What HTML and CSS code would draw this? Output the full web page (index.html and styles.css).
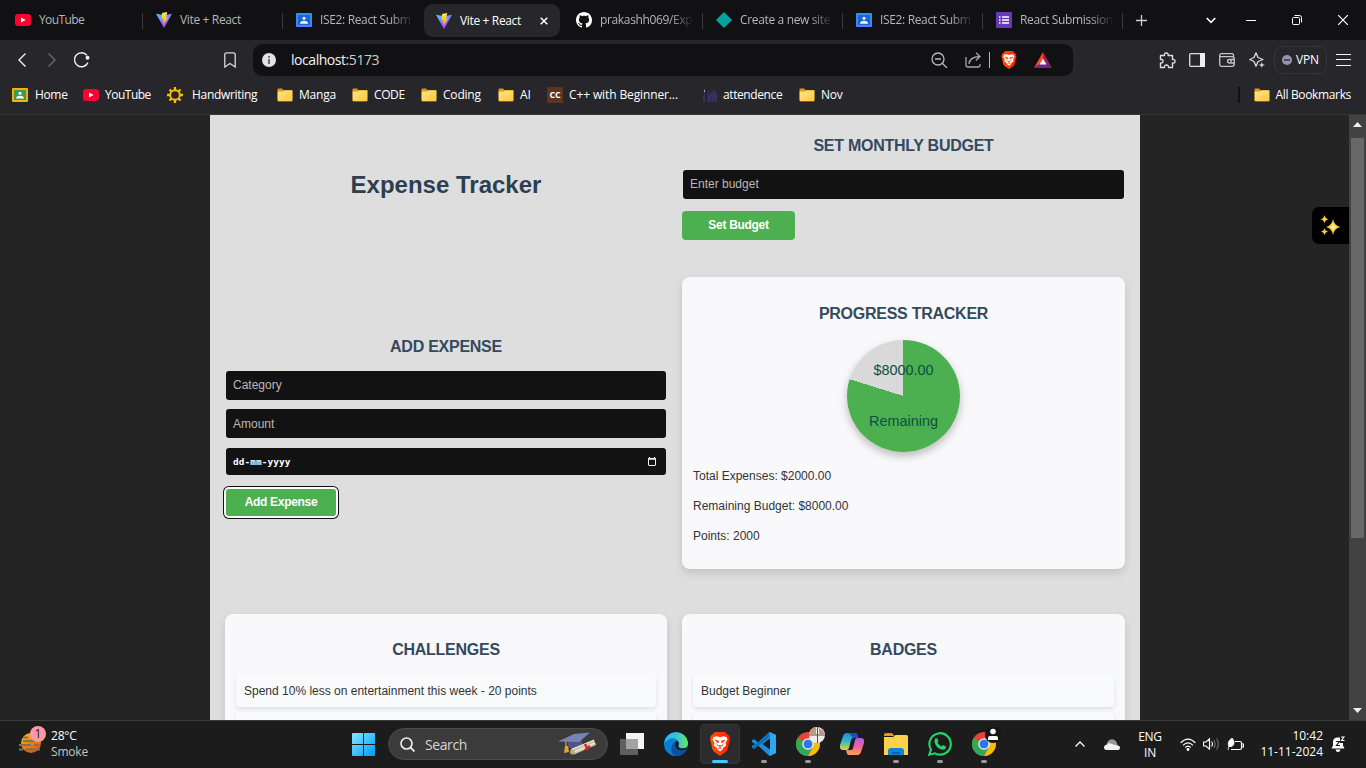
FILE: index.html
```html
<!DOCTYPE html>
<html lang="en">
<head>
<meta charset="utf-8">
<title>Vite + React</title>
<link rel="stylesheet" href="styles.css">
</head>
<body>
<svg class="defs" width="0" height="0">
  <defs>
    <linearGradient id="viteA" x1="0" y1="0" x2="0.6" y2="1"><stop offset="0" stop-color="#41d1ff"/><stop offset="1" stop-color="#bd34fe"/></linearGradient>
    <linearGradient id="viteB" x1="0" y1="0" x2="0" y2="1"><stop offset="0" stop-color="#ffea83"/><stop offset="0.2" stop-color="#ffdd35"/><stop offset="1" stop-color="#ffa800"/></linearGradient>
    <linearGradient id="folderG" x1="0" y1="0" x2="1" y2="1"><stop offset="0" stop-color="#ffe48c"/><stop offset="1" stop-color="#ffc93c"/></linearGradient>
    <linearGradient id="winG" x1="0" y1="0" x2="1" y2="1"><stop offset="0" stop-color="#8be2ff"/><stop offset="0.5" stop-color="#3fc4ff"/><stop offset="1" stop-color="#0a93f5"/></linearGradient>
    <linearGradient id="smokeG" x1="0" y1="0" x2="0.6" y2="1"><stop offset="0" stop-color="#fcc40c"/><stop offset="1" stop-color="#e2570a"/></linearGradient>
    <linearGradient id="edgeG" x1="0" y1="0" x2="1" y2="0"><stop offset="0" stop-color="#29b9e8"/><stop offset="0.55" stop-color="#35c6d8"/><stop offset="1" stop-color="#6fe84f"/></linearGradient>
    <linearGradient id="braveG" x1="0" y1="0" x2="1" y2="0"><stop offset="0" stop-color="#ff5500"/><stop offset="1" stop-color="#ff2000"/></linearGradient>
    <linearGradient id="copA" x1="0" y1="0" x2="0" y2="1"><stop offset="0" stop-color="#1a8be8"/><stop offset="0.5" stop-color="#35b8c9"/><stop offset="1" stop-color="#e9d22f"/></linearGradient>
    <linearGradient id="copB" x1="0" y1="0" x2="0" y2="1"><stop offset="0" stop-color="#b05df0"/><stop offset="0.5" stop-color="#f0609c"/><stop offset="1" stop-color="#ffa34a"/></linearGradient>
    <symbol id="youtube" viewBox="0 0 16 16"><rect y="2" width="16" height="12" rx="3" fill="#ff0033"/><path d="M6 5.6v4.8L10.6 8z" fill="#fff"/></symbol>
    <symbol id="vite" viewBox="0 0 16 16"><path d="M0 1.8 8 16 16 1.8 8 3.2z" fill="url(#viteA)"/><path d="M11.2.1 6 1.1 5.6 7.2l1.9-.3-.7 3 1.3-.3-.8 3.5L12 5.500l-2 .3z" fill="url(#viteB)"/></symbol>
    <symbol id="classroom" viewBox="0 0 16 16"><rect y="1" width="16" height="14" rx="1" fill="#4285f4"/><rect x="2" y="3" width="12" height="10" fill="#1967d2"/><circle cx="8" cy="6.300" r="1.500" fill="#fff"/><path d="M4 11.800c0-2.200 2.200-3 4-3s4 .8 4 3z" fill="#fff"/></symbol>
    <symbol id="folder" viewBox="0 0 16 14"><path d="M.5 1.500Q.5.500 1.500.500H5L6.500 2H15Q15.500 2 15.500 3V12.500Q15.500 13.500 14.500 13.500H1.500Q.5 13.500.5 12.500z" fill="#d99a1d"/><path d="M.7 3.500H6L7.200 2.500H15.300V12Q15.300 13 14.300 13H1.700Q.7 13 .7 12z" fill="url(#folderG)"/></symbol>
    <symbol id="chrome" viewBox="0 0 24 24"><circle cx="12" cy="12" r="12" fill="#ea4335"/><path d="M12 12 1.600 6A12 12 0 0 0 12 24l5.200-9z" fill="#34a853"/><path d="M12 6.500H22.600A12 12 0 0 1 12 24l5-9z" fill="#fbbc05"/><circle cx="12" cy="12" r="5.700" fill="#fff"/><circle cx="12" cy="12" r="4.500" fill="#2f76ec"/></symbol>
    <symbol id="brave" viewBox="0 0 20 24"><path d="M5 0H15L17.500 2.500 19 3.500 20 7 17.500 17.500Q17 19 15 20.500L10 24 5 20.500Q3 19 2.500 17.500L0 7 1 3.500 2.500 2.500z" fill="url(#braveG)"/><path d="M3.500 5 7 4.300 10 5.200 13 4.300 16.500 5 17.500 7.500 15.500 11 16.200 13.500 13.500 15.500 12.500 17.500 10 19.500 7.500 17.500 6.500 15.500 3.800 13.500 4.500 11 2.500 7.500z" fill="#fff"/><path d="M4.800 8 8.800 9 8 11zM15.200 8 11.200 9 12 11zM8.500 13.500h3L10 14.800zM6.500 11.500 8 14.500M13.500 11.500 12 14.500M8 16.500 10 15.500 12 16.500" fill="#ff4300" stroke="#ff4300" stroke-width=".7"/></symbol>
  </defs>
</svg>

<header class="tabs">
  <div class="tab tab-first"><svg class="ic16"><use href="#youtube"/></svg><span class="tab-title">YouTube</span></div>
  <div class="tab"><svg class="ic16"><use href="#vite"/></svg><span class="tab-title">Vite + React</span></div>
  <div class="tab tab-bare"><svg class="ic16"><use href="#classroom"/></svg><span class="tab-title fade">ISE2: React Subm</span></div>
  <div class="tab tab-bare tab-active"><svg class="ic16"><use href="#vite"/></svg><span class="tab-title">Vite + React</span><svg class="tab-close" viewBox="0 0 8 8"><path d="M.7.700 7.300 7.300M7.300.700.700 7.300" stroke="#fff" stroke-width="1.500"/></svg></div>
  <div class="tab"><svg class="ic16" viewBox="0 0 16 16"><path fill="#fff" d="M8 0C3.580 0 0 3.580 0 8c0 3.540 2.290 6.530 5.470 7.590.4.070.55-.17.55-.38 0-.19-.01-.82-.01-1.490-2.010.37-2.530-.49-2.690-.94-.09-.23-.48-.94-.82-1.130-.28-.15-.68-.52-.01-.53.63-.01 1.080.58 1.230.82.72 1.210 1.870.87 2.330.66.07-.52.28-.87.51-1.070-1.780-.2-3.640-.89-3.640-3.950 0-.87.31-1.590.82-2.150-.08-.2-.36-1.020.08-2.120 0 0 .67-.21 2.200.82.640-.18 1.320-.27 2-.27s1.360.09 2 .27c1.530-1.040 2.200-.82 2.200-.82.440 1.100.16 1.920.08 2.120.51.56.82 1.270.82 2.150 0 3.070-1.870 3.750-3.650 3.950.29.25.54.73.54 1.480 0 1.070-.01 1.930-.01 2.200 0 .21.15.46.55.38A8 8 0 0 0 16 8c0-4.420-3.580-8-8-8"/></svg><span class="tab-title fade">prakashh069/Exp</span></div>
  <div class="tab"><svg class="ic16" viewBox="0 0 16 16"><path d="M8 0 16 8 8 16 0 8z" fill="#05a3a0"/></svg><span class="tab-title fade">Create a new site</span></div>
  <div class="tab"><svg class="ic16"><use href="#classroom"/></svg><span class="tab-title fade">ISE2: React Subm</span></div>
  <div class="tab"><svg class="ic16" viewBox="0 0 16 16"><rect width="16" height="16" rx="1" fill="#673ab7"/><path d="M3 5h1.500M6 5h7M3 8h1.500M6 8h7M3 11h1.500M6 11h7" stroke="#fff" stroke-width="1.700"/></svg><span class="tab-title fade">React Submission</span></div>
  <div class="slot slot-new"><svg width="11" height="11" viewBox="0 0 11 11"><path d="M5.500 0v11M0 5.500h11" stroke="#d0d0d2" stroke-width="1.300"/></svg></div>
  <div class="slot slot-list"><svg width="10" height="7" viewBox="0 0 10 7"><path d="M.7 1 5 5.300 9.300 1" fill="none" stroke="#fff" stroke-width="1.600"/></svg></div>
  <div class="slot slot-win"><svg width="10" height="2"><path d="M0 1.500h10" stroke="#fff"/></svg></div>
  <div class="slot slot-win"><svg width="10" height="10" viewBox="0 0 10 10"><rect x=".5" y="2.500" width="7" height="7" rx="1" fill="none" stroke="#fff"/><path d="M2.500.500H7.500Q9.500.500 9.500 2.500V7.500" fill="none" stroke="#fff"/></svg></div>
  <div class="slot slot-win"><svg width="10" height="10" viewBox="0 0 10 10"><path d="M0 0 10 10M10 0 0 10" stroke="#fff" stroke-width="1.200"/></svg></div>
</header>

<nav class="toolbar">
  <div class="slot nav-slot"><svg width="8" height="14" viewBox="0 0 8 14"><path d="M7.500.500 1 7l6.500 6.500" fill="none" stroke="#eee" stroke-width="1.400"/></svg></div>
  <div class="slot nav-slot"><svg width="8" height="14" viewBox="0 0 8 14"><path d="M.5.500 7 7 .5 13.500" fill="none" stroke="#6e6e72" stroke-width="1.300"/></svg></div>
  <div class="slot nav-slot"><svg width="16" height="16" viewBox="0 0 16 16"><path d="M13.900 10.600A7 7 0 1 1 13 3.400" fill="none" stroke="#eee" stroke-width="1.400"/><circle cx="13.500" cy="5.800" r="2" fill="#eee"/></svg></div>
  <div class="slot mark-slot"><svg width="12" height="16" viewBox="0 0 12 16"><path d="M.8 15V2.800Q.8.800 2.800.800H9.200Q11.200.800 11.200 2.800V15L6 11.500z" fill="none" stroke="#d8d8dc" stroke-width="1.300"/></svg></div>
  <div class="address">
    <svg width="14" height="14" viewBox="0 0 14 14"><circle cx="7" cy="7" r="7" fill="#e2e2e7"/><path d="M7 6v5M7 3v1.700" stroke="#55555c" stroke-width="1.700"/></svg>
    <span class="url">localhost<span class="port">:5173</span></span>
    <svg class="zoom" width="17" height="16" viewBox="0 0 17 16"><circle cx="7" cy="7" r="6" fill="none" stroke="#b8b8bc" stroke-width="1.300"/><path d="M4 7h6M11.300 11.300 16 16" stroke="#b8b8bc" stroke-width="1.300"/></svg>
    <svg class="share" width="17" height="16" viewBox="0 0 17 16"><path d="M1 5V13Q1 15 3 15H13Q15 15 15 13V12M4 12Q4.500 5 14.500 4.500M11 .700 15 4.500 11 8.500" fill="none" stroke="#a6a6aa" stroke-width="1.300"/></svg>
    <span class="bar"></span>
    <svg class="shield" width="16" height="18"><use href="#brave"/></svg>
    <svg class="bat" width="18" height="16" viewBox="0 0 18 16"><path d="M9 0 0 16 9 10z" fill="#ff4724"/><path d="M9 0 18 16 9 10z" fill="#9e1f63"/><path d="M0 16H18L9 10z" fill="#662d91"/><path d="M9 6.500 5.500 12.500H12.500z" fill="#fff"/></svg>
  </div>
  <div class="slot ext-slot"><svg width="17" height="17" viewBox="0 0 17 17"><path d="M1.500 3.500H5.500Q5 1 7.300 1 9.600 1 9.100 3.500H13.500V7.500Q16 7 16 9.300 16 11.500 13.500 11V15.500H9.500Q9.700 13 7.500 13 5.200 13 5.500 15.500H1.500V11Q4 11.300 4 9.200 4 7 1.500 7.500z" fill="none" stroke="#ddd" stroke-width="1.400" stroke-linejoin="round"/></svg></div>
  <div class="slot side-slot"><svg width="16" height="14" viewBox="0 0 16 14"><rect x=".7" y=".7" width="14.600" height="12.600" rx="1" fill="none" stroke="#ddd" stroke-width="1.300"/><path d="M11 0H16V14H11z" fill="#eee"/></svg></div>
  <div class="slot side-slot"><svg width="16" height="14" viewBox="0 0 16 14"><path d="M14.500 4V2Q14.500.700 13 .700H2.500Q.7.700.700 2.500V11.500Q.7 13.300 2.500 13.300H13Q15.300 13.300 15.300 11V6Q15.300 3.700 13 3.700H1M15 6.500H10.500Q8.500 6.500 8.500 8.200 8.500 10 10.500 10H15M11 8.200h2" fill="none" stroke="#c4c4c4" stroke-width="1.300"/></svg></div>
  <div class="slot side-slot"><svg width="16" height="16" viewBox="0 0 16 16"><path d="M7 .8 9 5.500 14 7.500 9 9.500 7 14.200 5 9.500.800 7.500 5 5.500z" fill="none" stroke="#ddd" stroke-width="1.300" stroke-linejoin="round"/><path d="M12.800 10 13.600 12.200 16 13 13.600 13.800 12.800 16 12 13.800 9.500 13 12 12.200z" fill="#ddd"/></svg></div>
  <div class="vpn"><span class="vpn-dot"></span>VPN</div>
  <svg class="burger" width="15" height="12"><path d="M0 .5h15M0 5.500h15M0 11.500h15" stroke="#f2f2f2"/></svg>
</nav>

<nav class="bookmarks">
  <div class="bm w-home"><svg class="ic16" viewBox="0 0 16 16"><rect y="1" width="16" height="14" rx="1" fill="#f4b400"/><rect x="2" y="3" width="12" height="10" fill="#3c9a55"/><circle cx="8" cy="6.300" r="1.500" fill="#fff"/><path d="M4 11.500c0-2 2.200-2.700 4-2.700s4 .7 4 2.700z" fill="#fff"/></svg><span>Home</span></div>
  <div class="bm w-yt"><svg class="ic16"><use href="#youtube"/></svg><span>YouTube</span></div>
  <div class="bm w-hand"><svg class="ic16" viewBox="0 0 16 16"><circle cx="8" cy="8" r="4.800" fill="none" stroke="#fbbc05" stroke-width="1.900"/><path d="M8 0v3M8 13v3M0 8h3M13 8h3M2.500 2.500l2 2M11.500 11.500l2 2M13.500 2.500l-2 2M4.500 11.500l-2 2" stroke="#fbbc05" stroke-width="2.300"/></svg><span>Handwriting</span></div>
  <div class="bm w-manga"><svg class="ic-folder"><use href="#folder"/></svg><span>Manga</span></div>
  <div class="bm w-code"><svg class="ic-folder"><use href="#folder"/></svg><span>CODE</span></div>
  <div class="bm w-coding"><svg class="ic-folder"><use href="#folder"/></svg><span>Coding</span></div>
  <div class="bm w-ai"><svg class="ic-folder"><use href="#folder"/></svg><span>AI</span></div>
  <div class="bm w-cpp"><b class="cc">CC</b><span>C++ with Beginner...</span></div>
  <div class="bm w-att"><svg class="ic16" viewBox="0 0 16 16"><path d="M3 1h1v14H2V9h1zM7 4h1v11H6zM8 8l2-2 3-4 1 3 2 1v9h-2v-4l-1 4h-2V9l-1 6H8z" fill="#38305e"/><path d="M3 3h1v2H3z" fill="#aaa"/></svg><span>attendence</span></div>
  <div class="bm"><svg class="ic-folder"><use href="#folder"/></svg><span>Nov</span></div>
  <div class="bm bm-all"><i class="bm-sep"></i><svg class="ic-folder"><use href="#folder"/></svg><span>All Bookmarks</span></div>
</nav>

<div class="viewport">
  <main class="app">
    <h1 class="title">Expense Tracker</h1>
    <section class="budget">
      <h2>Set Monthly Budget</h2>
      <div class="field">Enter budget</div>
      <button class="btn">Set Budget</button>
    </section>
    <section class="expense">
      <h2>Add Expense</h2>
      <div class="field">Category</div>
      <div class="field field-amount">Amount</div>
      <div class="field field-date"><span class="date">dd<i>-</i>mm<i>-</i>yyyy</span><svg width="8" height="9" viewBox="0 0 8 9"><rect x=".5" y="1.500" width="7" height="7" rx=".5" fill="none" stroke="#eee"/><path d="M0 2h8M1.500 0v2M6.500 0v2" stroke="#eee" stroke-width="1.300"/></svg></div>
      <button class="btn btn-focus">Add Expense</button>
    </section>
    <section class="card progress">
      <h2>Progress Tracker</h2>
      <div class="pie"><span>$8000.00</span><span>Remaining</span></div>
      <p>Total Expenses: $2000.00</p>
      <p>Remaining Budget: $8000.00</p>
      <p>Points: 2000</p>
    </section>
    <section class="card">
      <h2>Challenges</h2>
      <ul class="list"><li>Spend 10% less on entertainment this week - 20 points</li><li></li></ul>
    </section>
    <section class="card">
      <h2>Badges</h2>
      <ul class="list"><li>Budget Beginner</li><li></li></ul>
    </section>
  </main>
  <div class="sparkle"><svg width="21" height="21" viewBox="0 0 21 21"><path d="M13 4Q14 10.500 20.500 12 14 13.500 13 20 12 13.500 6 12 12 10.500 13 4zM4.500 0Q5 3.500 8.500 4.300 5 5 4.500 8.500 4 5 .500 4.300 4 3.500 4.500 0zM4.500 13Q5 16 8 16.500 5 17.200 4.500 20 4 17.200 1 16.500 4 16 4.500 13z" fill="#ffcf28"/><path d="M13 8Q13.500 11.500 17 12 13.500 12.500 13 16 12.500 12.500 9 12 12.500 11.500 13 8z" fill="#fff0a8"/></svg></div>
  <div class="scroll">
    <svg width="9" height="6"><path d="M4.500 0 9 5H0z" fill="#f0f0f0"/></svg>
    <span class="thumb"></span>
    <svg width="9" height="6"><path d="M4.500 5 9 0H0z" fill="#f0f0f0"/></svg>
  </div>
</div>

<footer class="taskbar">
  <div class="weather">
    <svg width="28" height="30" viewBox="0 0 28 30"><circle cx="12" cy="17" r="10" fill="url(#smokeG)"/><path d="M4 11.500h5M4 15h14M0 19h12M15 19h5M6 23.500h15M0 23.500h4" stroke="#77736c" stroke-width="2"/><circle cx="19" cy="8" r="8" fill="#ff99a4"/><text x="19" y="12" class="badge-num">1</text></svg>
    <div class="weather-text"><span>28°C</span><span class="dim">Smoke</span></div>
  </div>
  <svg class="start" width="23" height="23" viewBox="0 0 23 23"><path d="M1 0H11V11H0V1Q0 0 1 0zM12 0H22Q23 0 23 1V11H12zM0 12H11V23H1Q0 23 0 22zM12 12H23V22Q23 23 22 23H12z" fill="url(#winG)"/></svg>
  <div class="search">
    <svg width="15" height="15" viewBox="0 0 15 15"><circle cx="6.500" cy="6.500" r="5.500" fill="none" stroke="#eee" stroke-width="1.600"/><path d="M10.500 10.500 14.500 14.500" stroke="#eee" stroke-width="1.800"/></svg>
    <span>Search</span>
    <svg class="grad" width="39" height="24" viewBox="0 0 39 24"><path d="M10 8V15Q15 19 24 13V6z" fill="#4e5688"/><path d="M0 9.500 16 2 32 .500 21 10z" fill="#7882b5"/><path d="M8 9V15" stroke="#c98d25" stroke-width="1.500"/><path d="M7 14 10 14 11 20 6 21z" fill="#e2a52c"/><path d="M13 17.500 36 8 38 13 16 22.500z" fill="#cfc5ad"/><path d="M13 17.500 36 8M15 20.500 37 11" stroke="#fff3d8" stroke-width="1"/><circle cx="14.500" cy="20" r="2.500" fill="#bba988"/><path d="M27 12 30 18M27 18l5-4" stroke="#c92532" stroke-width="2.300"/></svg>
  </div>
  <div class="app-slot"><svg width="24" height="22" viewBox="0 0 24 22"><path d="M6 0H24V16H6z" fill="#f4f4f4"/><path d="M0 6H18V22H0z" fill="#6b6b6b" fill-opacity=".85"/><path d="M6 6H18V16H6z" fill="#a3a3a3"/></svg></div>
  <div class="app-slot"><svg width="24" height="24" viewBox="0 0 24 24"><circle cx="12" cy="12" r="12" fill="#087fd6"/><path d="M.2 11A12 12 0 0 1 24 10.500Q24 16 18.500 16 13.500 16 14.500 13.500 16 10 12.500 7.500 7 4 .200 11z" fill="url(#edgeG)"/><path d="M13 24Q6 22 7.500 15 8.500 10.500 12 9.500 9 14 13 17.500 17 20.500 22.500 17.500 19 23.500 13 24z" fill="#0c4fa0"/><path d="M12.500 8.500Q16 10.500 14.500 13.500 13.500 16 18.500 16.500 21 16.500 22.500 15.500L22.800 17.300Q17 20 13 17.200 9 14 12.500 8.500z" fill="#1b1b1b"/></svg></div>
  <div class="app-slot app-on"><svg width="20" height="24"><use href="#brave"/></svg><i class="dot dot-on"></i></div>
  <div class="app-slot"><svg width="24" height="24" viewBox="0 0 24 24"><path d="M17.500 0 24 3V21L17.500 24 6 13.500 2 17 0 15.500V8.500L2 7 6 10.500z" fill="#1d8ddb"/><path d="M17.500 0 0 15.500 2 17 18 5z" fill="#0b6fb8"/><path d="M17.500 0 24 3V21L17.500 24z" fill="#2fa8f0"/><path d="M18 6.500V17.500L10.500 12zM0 10V14L3 12z" fill="#1c1c1c"/></svg><i class="dot"></i></div>
  <div class="app-slot"><svg width="32" height="32" viewBox="0 0 32 32" class="chrome1"><use href="#chrome" x="2" y="7" width="24" height="24"/><circle cx="23" cy="10" r="8" fill="#f1ebe6"/><path d="M16 7Q18 2 22 2V9H15.200zM25 3v6h5.500Q30 5 25 3z" fill="#c7967f"/><path d="M15 9.500h16v1H15zM23 2h1v16h-1z" fill="#54504c"/></svg><i class="dot"></i></div>
  <div class="app-slot"><svg width="24" height="22" viewBox="0 0 24 22"><path d="M7 0H15Q17 0 17.500 3L18 5H13Q11.500 5 11 7L9 15Q8.500 17 6.500 17H3Q-1 17 0 12L3 3Q4 0 7 0z" fill="url(#copA)"/><path d="M17 22H9Q7 22 6.500 19L6 17H11Q12.500 17 13 15L15 7Q15.500 5 17.500 5H21Q25 5 24 10L21 19Q20 22 17 22z" fill="url(#copB)"/><path d="M7 0H15Q17 0 17.500 3L18 5H13L10.500 2Q9.500 0 7 0z" fill="#2349c9"/></svg></div>
  <div class="app-slot"><svg width="24" height="22" viewBox="0 0 24 22"><path d="M0 2Q0 0 2 0H8L10.500 3H0z" fill="#e09b16"/><path d="M0 4H9L11.500 2H22.500Q24 2 24 3.500V22H0z" fill="#fdd14b"/><path d="M4 22V18Q4 15 7 15H17Q20 15 20 18V22z" fill="#1482d8"/><path d="M8 19h8v2H8z" fill="#0c60a8"/></svg><i class="dot"></i></div>
  <div class="app-slot"><svg width="24" height="24" viewBox="0 0 24 24"><path d="M1.300 22.700 3 17.500A10.700 10.700 0 1 1 7 21.300z" fill="none" stroke="#25d366" stroke-width="2.100"/><path d="M7 7Q8 5.500 9.300 6.500L10.500 9.200 9.500 10.800Q11 13.500 13.700 14.500L15 13 18 14.500Q18 18 14.500 17.800 8 16.500 6.500 10 6.300 8.500 7 7z" fill="#25d366"/></svg><i class="dot"></i></div>
  <div class="app-slot"><svg width="32" height="32" viewBox="0 0 32 32" class="chrome1"><use href="#chrome" x="2" y="7" width="24" height="24"/><circle cx="23" cy="10" r="8" fill="#151515"/><circle cx="23" cy="6.500" r="2.800" fill="#fff"/><path d="M18 15V13Q18 11 20 11H26Q28 11 28 13V15z" fill="#fff"/></svg><i class="dot"></i></div>
  <div class="tray">
    <svg class="t-up" width="10" height="6" viewBox="0 0 10 6"><path d="M.5 5.500 5 1 9.500 5.500" fill="none" stroke="#fff" stroke-width="1.300"/></svg>
    <svg class="t-cloud" width="16" height="11" viewBox="0 0 16 11"><path d="M3.500 8A5 5 0 0 1 12.500 3L13.500 6z" fill="#999"/><path d="M3 11Q0 11 0 8.500 0 6 3 5.500 5 3.500 8 5L11 6Q16 6 16 8.700 16 11 13 11z" fill="#f4f4f4"/></svg>
    <div class="t-lang"><span>ENG</span><span>IN</span></div>
    <svg class="t-wifi" width="16" height="13" viewBox="0 0 16 13"><path d="M.7 4.700Q8-2.500 15.300 4.700M3 7.300Q8 2.300 13 7.300M5.300 9.500Q8 6.800 10.700 9.500" fill="none" stroke="#fff" stroke-width="1.200"/><circle cx="8" cy="11.500" r="1.400" fill="#fff"/></svg>
    <svg class="t-vol" width="16" height="12" viewBox="0 0 16 12"><path d="M.6 4H3L6.500.800V11.200L3 8H.600zM8.500 3.500Q10.500 6 8.500 8.500" fill="none" stroke="#fff" stroke-width="1.100"/><path d="M11 2Q13.500 6 11 10M13.500.500Q17 6 13.500 11.500" fill="none" stroke="#777"/></svg>
    <svg class="t-batt" width="17" height="13" viewBox="0 0 17 13"><path d="M8 3.500H13Q14.500 3.500 14.500 5V10Q14.500 11.500 13 11.500H4M15 6h1.500v3H15" fill="none" stroke="#fff" stroke-width="1.200"/><path d="M5 0Q8 3 6.800 6.500 5 9.500 2 8.500-.5 4 5 0zM2 8 1 12" fill="#fff" stroke="#fff" stroke-width=".8"/></svg>
    <div class="clock"><span>10:42</span><span>11-11-2024</span></div>
    <svg class="t-bell" width="15" height="16" viewBox="0 0 15 16"><path d="M.5 12.500 2 9.500V5.500Q2.500 1.500 6.500 1.500H9V7H12V9.500L13.500 12.500zM4.500 13.500H9.500Q9 16 7 16 5 16 4.500 13.500z" fill="#fff"/><path d="M5 5.500H8.500L5.500 9.500H9" fill="none" stroke="#1c1c1c" stroke-width="1.200"/><path d="M10 1H13L10.500 4.500H13.500" fill="none" stroke="#fff" stroke-width="1.100"/></svg>
  </div>
</footer>
</body>
</html>
```

FILE: styles.css
```css
* { box-sizing: border-box; }
body {
  margin: 0; width: 1366px; height: 768px; overflow: hidden;
  display: flex; flex-direction: column;
  background: #242424; color: #fff;
  font: 12px "Open Sans", "Noto Sans", sans-serif;
}
svg { display: block; flex: none; }
.defs { position: absolute; }
.ic16 { width: 16px; height: 16px; }
.ic-folder { width: 16px; height: 14px; }
.slot { display: flex; align-items: center; justify-content: center; flex: none; }

/* Tab strip */
.tabs { height: 40px; flex: none; display: flex; background: #111113; padding-left: 3px; }
.tab {
  width: 140px; flex: none; display: flex; align-items: center; padding-left: 13px;
  background: linear-gradient(#3a3a3d, #3a3a3d) right 13px / 1px 16px no-repeat;
}
.tab-first { padding-left: 12px; }
.tab-bare { background: none; }
.tab-title { margin-left: 8px; width: 98px; white-space: nowrap; color: #b6b6b8; font-size: 12px; letter-spacing: -.35px; padding-bottom: 1px; }
.tab-first .tab-title { letter-spacing: -.6px; }
.fade { -webkit-mask-image: linear-gradient(90deg, #000 70px, transparent 94px); mask-image: linear-gradient(90deg, #000 70px, transparent 94px); }
.tab-active { width: 136px; height: 33px; margin: 4px 3px 0 1px; padding-left: 12px; border-radius: 9px; background: #27272b; }
.tab-active .tab-title { width: 80px; color: #fff; }
.tab-close { width: 8px; height: 8px; }
.slot-new { width: 36px; }
.slot-list { width: 103px; margin-right: -34px; }
.slot-win { width: 46px; }

/* Toolbar */
.toolbar { height: 40px; flex: none; display: flex; align-items: center; background: #27272b; padding-left: 7px; }
.nav-slot { width: 30px; }
.mark-slot { width: 46px; margin-left: 110px; }
.address {
  width: 820px; height: 32px; border-radius: 9px; background: #111113;
  display: flex; align-items: center; padding-left: 9px;
}
.url { font-size: 14px; margin: 0 0 1px 15px; width: 640px; letter-spacing: -.45px; color: #f2f2f2; }
.port { color: #cdcdcf; }
.share { margin-left: 17px; }
.bar { width: 1px; height: 16px; background: #b5b5b8; margin-left: 7px; }
.shield { margin-left: 11px; }
.bat { margin-left: 17px; }
.ext-slot { width: 30px; margin-left: 79px; }
.side-slot { width: 30px; }
.vpn { width: 53px; height: 28px; margin-left: 2px; border: 1px solid #35353a; border-radius: 8px; display: flex; align-items: center; padding: 0 0 1px 7px; gap: 4px; letter-spacing: -.2px; }
.vpn-dot { width: 10px; height: 10px; border-radius: 5px; background: linear-gradient(#4b4b5c, #4b4b5c) center / 6px 2px no-repeat #9494ab; }
.burger { margin-left: 9px; }

/* Bookmarks */
.bookmarks { height: 35px; flex: none; display: flex; background: #27272b; border-bottom: 1px solid #38383c; padding: 0 15px 4px 12px; }
.bm { display: flex; align-items: center; gap: 6px; flex: none; white-space: nowrap; letter-spacing: -.2px; }
.bm span { padding-bottom: 1px; }
.w-home { width: 71px; letter-spacing: -.35px; }
.w-home span { margin-left: 1px; }
.w-yt { width: 84px; letter-spacing: -.5px; }
.w-hand { width: 110px; gap: 9px; letter-spacing: -.3px; }
.w-manga { width: 75px; }
.w-code { width: 69px; letter-spacing: -.4px; }
.w-coding { width: 77px; }
.w-ai { width: 49px; }
.w-cpp { width: 154px; letter-spacing: -.12px; }
.w-att { width: 98px; letter-spacing: -.4px; }
.bm-all { margin-left: auto; letter-spacing: -.35px; }
.bm-sep { width: 2px; height: 16px; background: #121214; margin-right: 8px; }
.cc { width: 16px; height: 16px; background: #5b3520; font: bold 9px/16px "Open Sans", sans-serif; text-align: center; }

/* Page */
.viewport { position: relative; height: 605px; flex: none; display: flex; overflow: hidden; font-family: "Liberation Sans", Arial, sans-serif; }
.app {
  width: 930px; height: 720px; margin-left: 210px; padding: 7px 15px; background: #dedede; color: #333;
  display: grid; grid-template-columns: 442px 443px; grid-template-rows: 155px 337px 213px;
  column-gap: 15px;
}
.title { margin: 49px 0 0; text-align: center; font-size: 24px; line-height: 28px; color: #2c3e50; }
h2 { margin: 0; text-align: center; text-transform: uppercase; font-size: 16px; line-height: 18px; letter-spacing: -.26px; color: #34495e; }
.budget { padding-top: 15px; }
.field { height: 29px; margin: 0 1px 9px; padding: 0 7px 2px; display: flex; align-items: center; border-radius: 3px; background: #121212; color: #b9b9b9; }
h2 + .field { margin-top: 15px; }
.field-amount { padding-bottom: 0; }
.btn { display: block; width: 113px; height: 29px; margin: 12px 0 0; border: 0; border-radius: 4px; padding: 0 0 2px; background: #4caf50; color: #fff; font: bold 12px "Liberation Sans", Arial, sans-serif; letter-spacing: -.3px; }
.expense { padding-top: 61px; }
.field-date { height: 27px; margin-top: 10px; padding-bottom: 0; justify-content: space-between; padding-right: 10px; color: #fff; }
.date { font: bold 9.400px "DejaVu Sans Mono", monospace; letter-spacing: .1px; }
.date i { font-style: normal; }
.btn-focus { width: 110px; height: 27px; margin: 14px 1px 0; border-radius: 3px; box-shadow: 0 0 0 2px #fff, 0 0 0 3px #101010; }
.card { padding: 27px 11px 0; border-radius: 8px; background: #f9f9fb; box-shadow: 0 4px 8px rgba(0, 0, 0, .12); }
.progress { height: 292px; padding-top: 28px; }
.pie {
  width: 113px; height: 112px; margin: 17px auto; border-radius: 50%; padding-bottom: 2px;
  background: conic-gradient(#4caf50 0 79.800%, #d9d9d9 79.800%);
  box-shadow: 0 4px 8px rgba(0, 0, 0, .25);
  display: flex; flex-direction: column; align-items: center; justify-content: center; gap: 35px;
  font-size: 14.400px; line-height: 16px; color: #0b4f45;
}
.progress p { margin: 0 0 16px; line-height: 14px; }
.list { list-style: none; margin: 16px 0 0; padding: 0; }
.list li { height: 32px; margin: 0 0 5px; padding: 0 8px; line-height: 32px; border-radius: 4px; background: #f8fafb; box-shadow: 0 2px 4px rgba(0, 0, 0, .1); }
.sparkle { position: absolute; right: 17px; top: 92px; width: 37px; height: 37px; border-radius: 7px 0 0 7px; background: #000; display: flex; align-items: center; justify-content: center; }
.scroll { margin-left: auto; width: 17px; background: #424242; display: flex; flex-direction: column; align-items: center; padding: 7px 0 6px; }
.thumb { width: 13px; height: 400px; margin: 10px 0 auto; background: #686868; }

/* Taskbar */
.taskbar { height: 48px; flex: none; display: flex; align-items: center; background: #1c1c1c; border-top: 1px solid #3c3c3c; padding-bottom: 1px; }
.weather { display: flex; width: 352px; padding-left: 19px; gap: 4px; align-items: center; }
.weather-text { display: flex; flex-direction: column; line-height: 16px; letter-spacing: -.2px; }
.weather > svg { margin-top: -6px; }
.dim { color: #c4c4c4; }
.badge-num { font: 12px "Open Sans", sans-serif; text-anchor: middle; fill: #222; }
.search { width: 220px; height: 32px; margin: 0 2px 0 13px; border: 1px solid #4b4b4b; border-radius: 16px; background: #3b3b3b; display: flex; align-items: center; padding: 0 10px 0 11px; gap: 10px; font-size: 14px; letter-spacing: -.4px; color: #d5d5d5; }
.grad { margin-left: auto; }
.app-slot { position: relative; width: 44px; height: 40px; display: flex; align-items: center; justify-content: center; flex: none; }
.app-on { width: 40px; margin: 0 2px; border-radius: 4px; background: #2c2c2c; border: 1px solid #343434; }
.chrome1 { margin: -7px 0 0 4px; }
.dot { position: absolute; bottom: 1px; left: 50%; width: 6px; height: 3px; margin-left: -3px; border-radius: 2px; background: #9a9a9a; }
.dot-on { bottom: 0; width: 16px; margin-left: -8px; background: #4cc2ff; }
.tray { display: flex; align-items: center; margin-left: 69px; flex: none; }
.t-cloud { margin-left: 19px; }
.t-lang { width: 40px; margin: 1px 0 0 10px; display: flex; flex-direction: column; align-items: center; line-height: 16px; letter-spacing: -.3px; }
.t-wifi { margin-left: 10px; }
.t-vol { margin-left: 7px; }
.t-batt { margin-left: 8px; }
.clock { width: 79px; display: flex; flex-direction: column; align-items: flex-end; line-height: 16px; letter-spacing: 0; }
.t-bell { margin-left: 8px; }
```
